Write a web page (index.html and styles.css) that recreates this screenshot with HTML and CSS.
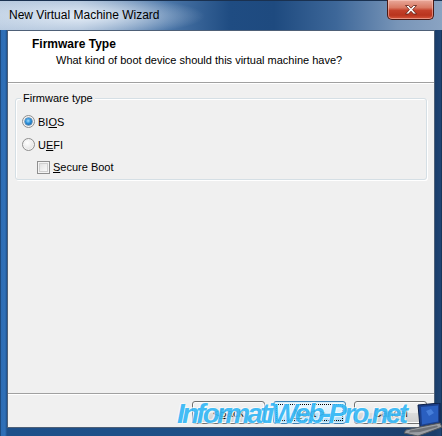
FILE: index.html
```html
<!DOCTYPE html>
<html>
<head>
<meta charset="utf-8">
<link rel="stylesheet" href="styles.css">
</head>
<body>
<div class="window">
  <div class="titlebar">
    <span class="title">New Virtual Machine Wizard</span>
    <div class="close">
      <svg width="46" height="19" viewBox="0 0 46 19">
        <path d="M17.5 5.5 L20.5 5.5 L23 8.2 L25.5 5.5 L28.5 5.5 L24.6 9.7 L28.5 14 L25.5 14 L23 11.2 L20.5 14 L17.5 14 L21.4 9.7 Z" fill="#fff" stroke="#5a1a10" stroke-width="0.8" stroke-linejoin="round"/>
      </svg>
    </div>
  </div>
  <div class="frame">
    <div class="client">
      <div class="header">
        <div class="h-title">Firmware Type</div>
        <div class="h-sub">What kind of boot device should this virtual machine have?</div>
      </div>
      <div class="content">
        <fieldset class="group">
          <legend class="legend">Firmware type</legend>
          <div class="opt"><span class="radio checked"></span><span>BI<u>O</u>S</span></div>
          <div class="opt"><span class="radio"></span><span>U<u>E</u>FI</span></div>
          <div class="opt sub"><span class="check"></span><span><u>S</u>ecure Boot</span></div>
        </fieldset>
      </div>
      <div class="footer">
        <div class="btn">&lt; <u>B</u>ack</div>
        <div class="btn default"><span class="focus"><u>N</u>ext &gt;</span></div>
        <div class="btn">Cancel</div>
      </div>
    </div>
  </div>
  <div class="watermark">InformatiWeb-Pro.net</div>
  <svg class="laptop" width="38" height="34" viewBox="0 0 38 34">
    <path d="M14 2 L36 0 L36 20 L16 24 Z" fill="#1b3f8a" stroke="#0c1f45" stroke-width="1"/>
    <path d="M17 4 L34 2.5 L34 18.5 L18 21.5 Z" fill="#2a5fc0"/>
    <path d="M22 8 L27 6 L30 10 L25 13 Z" fill="#4d86e0" opacity="0.8"/>
    <path d="M2 27 L16 24 L36 20 L38 24 L14 33 L0 30 Z" fill="#9a9ea4" stroke="#55595e" stroke-width="1"/>
    <path d="M6 27.5 L17 25.5 L33 22.5 L34 24 L16 29 L5 29.5 Z" fill="#6e7278"/>
  </svg>
</div>
</body>
</html>
```
FILE: styles.css
```css
* { box-sizing: border-box; }
html, body { margin: 0; padding: 0; }
body {
  width: 442px;
  height: 436px;
  overflow: hidden;
  font-family: "Liberation Sans", Arial, sans-serif;
  font-size: 11px;
  color: #000;
}
.window {
  position: relative;
  width: 442px;
  height: 436px;
  display: flex;
  flex-direction: column;
  background: linear-gradient(to right, #0f2a4c 0px, #2c6cb4 1px, #2f70b8 5px, #1d4f8a 7px, #1f4f86 50%, #1a3d6a 435px, #1f4574 441px, #0f2640 442px);
}
.titlebar {
  height: 30px;
  flex: none;
  position: relative;
  display: flex;
  align-items: flex-start;
  background:
    radial-gradient(ellipse 120px 20px at 85px 15px, rgba(235,242,250,0.9), rgba(235,242,250,0) 100%),
    linear-gradient(to right, #b9cbe0 0%, #a6bcd6 18%, #4b76a8 38%, #1f4c82 52%, #1e4a7f 62%, #3d6799 76%, #7895b8 90%, #8aa3c2 100%);
  border-top: 1px solid #1a3150;
}
.title {
  margin: 6px 0 0 9px;
  line-height: 16px;
  font-size: 12px;
  color: #000;
}
.close {
  position: absolute;
  left: 387px;
  top: -1px;
  width: 47px;
  height: 20px;
  border: 1px solid #4a1a14;
  border-top: none;
  border-radius: 0 0 5px 5px;
  background: linear-gradient(to bottom, #e9a99b 0%, #d97a64 40%, #c3402a 55%, #b9341e 80%, #d5563c 100%);
  box-shadow: inset 0 0 0 1px rgba(255,210,200,0.5);
}
.close svg { display: block; }
.frame {
  flex: 1;
  display: flex;
  padding: 0 7px 8px 7px;
}
.client {
  flex: 1;
  display: flex;
  flex-direction: column;
  background: #f0f0f0;
  border: 1px solid #4e6077;
}
.header {
  height: 52px;
  flex: none;
  background: #fff;
  border-bottom: 1px solid #a0a0a0;
  padding: 5px 0 0 24px;
  box-shadow: 0 1px 0 #fff;
}
.h-title {
  font-weight: bold;
  font-size: 12px;
  line-height: 16px;
}
.h-sub {
  line-height: 16px;
  padding-left: 24px;
}
.content {
  flex: 1;
  padding: 7px 7px 0 7px;
}
.group {
  margin: 0;
  padding: 4px 0 0 6px;
  height: 90px;
  border: 1px solid #d5dfe5;
  border-radius: 3px;
  box-shadow: 1px 1px 0 #fff, inset 1px 1px 0 #fff;
  min-width: 0;
}
.legend {
  margin-left: -1px;
  padding: 0 2px;
  line-height: 16px;
  background: #f0f0f0;
}
.opt {
  height: 23px;
  display: flex;
  align-items: center;
  gap: 3px;
}
.opt.sub {
  height: 22px;
  padding-left: 15px;
}
.radio {
  width: 13px;
  height: 13px;
  border-radius: 50%;
  border: 1px solid #8f8f8f;
  background: radial-gradient(circle at 40% 35%, #ffffff 0%, #f0f0f0 40%, #d6d6d6 100%);
  box-shadow: inset 0 0 0 1px #f4f4f4;
  position: relative;
  flex: none;
}
.radio.checked::after {
  content: "";
  position: absolute;
  left: 2px;
  top: 2px;
  width: 7px;
  height: 7px;
  border-radius: 50%;
  background: radial-gradient(circle at 45% 40%, #9fdcff 0%, #2b8fd8 45%, #0b4f92 100%);
  box-shadow: 0 0 0 0.5px #1c5a90;
}
.check {
  width: 13px;
  height: 13px;
  border: 1px solid #8f8f8f;
  background: linear-gradient(135deg, #dcdcdc 0%, #f2f2f2 60%, #ffffff 100%);
  box-shadow: inset 0 0 0 1px #f4f4f4, inset 0 0 0 2px #d0d0d0;
  flex: none;
}
.footer {
  height: 34px;
  flex: none;
  border-top: 1px solid #a0a0a0;
  box-shadow: inset 0 1px 0 #fff;
  display: flex;
  justify-content: flex-end;
  align-items: flex-start;
  gap: 8px;
  padding: 7px 7px 0 0;
}
.btn {
  width: 73px;
  height: 23px;
  border: 1px solid #707070;
  border-radius: 3px;
  background: linear-gradient(to bottom, #f2f2f2 0%, #ebebeb 50%, #dddddd 51%, #cfcfcf 100%);
  box-shadow: inset 0 0 0 1px #fcfcfc;
  display: flex;
  align-items: center;
  justify-content: center;
  line-height: 16px;
}
.btn.default {
  border-color: #3c7fb1;
  background: linear-gradient(to bottom, #eaf6fd 0%, #d9f0fc 50%, #bee6fd 51%, #a7d9f5 100%);
  box-shadow: inset 0 0 0 1px #d8f0fb;
  padding: 2px;
}
.focus {
  flex: 1;
  align-self: stretch;
  border: 1px dotted #000;
  display: flex;
  align-items: center;
  justify-content: center;
}
.watermark {
  position: absolute;
  left: 177px;
  top: 398px;
  font-family: "Liberation Sans", Arial, sans-serif;
  font-style: italic;
  font-weight: bold;
  font-size: 28px;
  line-height: 32px;
  letter-spacing: -2.8px;
  color: #36b8f6;
  opacity: 0.92;
  text-shadow: 0 0 2px #ffffff, 1px 1px 0 rgba(255,255,255,0.6), -1px -1px 0 rgba(255,255,255,0.6);
  white-space: nowrap;
}
.laptop {
  position: absolute;
  left: 404px;
  top: 403px;
}
```
